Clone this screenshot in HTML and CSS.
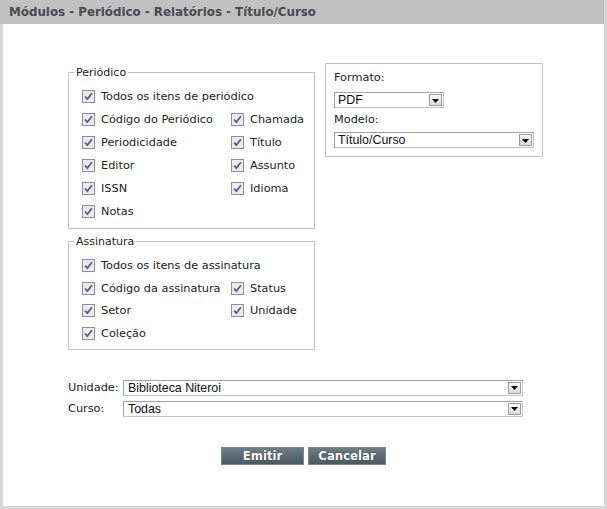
FILE: index.html
```html
<!DOCTYPE html>
<html lang="pt">
<head>
<meta charset="utf-8">
<title>Relatórios - Título/Curso</title>
<link rel="stylesheet" href="styles.css">
</head>
<body>
<div class="window">
  <div class="titlebar">Módulos - Periódico - Relatórios - Título/Curso</div>
  <div class="content">
    <div class="top">
      <div class="left-col">
        <fieldset class="group">
          <legend>Periódico</legend>
          <div class="checks">
            <label class="chk full"><svg class="cb" viewBox="0 0 13 13"><rect x="0.5" y="0.5" width="12" height="12" fill="#ebebeb" stroke="#8e8f8f"/><path d="M3 6.5 L5.3 9 L10 3.2" fill="none" stroke="#4f5f96" stroke-width="1.8"/></svg>Todos os itens de periódico</label>
            <label class="chk"><svg class="cb" viewBox="0 0 13 13"><rect x="0.5" y="0.5" width="12" height="12" fill="#ebebeb" stroke="#8e8f8f"/><path d="M3 6.5 L5.3 9 L10 3.2" fill="none" stroke="#4f5f96" stroke-width="1.8"/></svg>Código do Periódico</label>
            <label class="chk"><svg class="cb" viewBox="0 0 13 13"><rect x="0.5" y="0.5" width="12" height="12" fill="#ebebeb" stroke="#8e8f8f"/><path d="M3 6.5 L5.3 9 L10 3.2" fill="none" stroke="#4f5f96" stroke-width="1.8"/></svg>Chamada</label>
            <label class="chk"><svg class="cb" viewBox="0 0 13 13"><rect x="0.5" y="0.5" width="12" height="12" fill="#ebebeb" stroke="#8e8f8f"/><path d="M3 6.5 L5.3 9 L10 3.2" fill="none" stroke="#4f5f96" stroke-width="1.8"/></svg>Periodicidade</label>
            <label class="chk"><svg class="cb" viewBox="0 0 13 13"><rect x="0.5" y="0.5" width="12" height="12" fill="#ebebeb" stroke="#8e8f8f"/><path d="M3 6.5 L5.3 9 L10 3.2" fill="none" stroke="#4f5f96" stroke-width="1.8"/></svg>Título</label>
            <label class="chk"><svg class="cb" viewBox="0 0 13 13"><rect x="0.5" y="0.5" width="12" height="12" fill="#ebebeb" stroke="#8e8f8f"/><path d="M3 6.5 L5.3 9 L10 3.2" fill="none" stroke="#4f5f96" stroke-width="1.8"/></svg>Editor</label>
            <label class="chk"><svg class="cb" viewBox="0 0 13 13"><rect x="0.5" y="0.5" width="12" height="12" fill="#ebebeb" stroke="#8e8f8f"/><path d="M3 6.5 L5.3 9 L10 3.2" fill="none" stroke="#4f5f96" stroke-width="1.8"/></svg>Assunto</label>
            <label class="chk"><svg class="cb" viewBox="0 0 13 13"><rect x="0.5" y="0.5" width="12" height="12" fill="#ebebeb" stroke="#8e8f8f"/><path d="M3 6.5 L5.3 9 L10 3.2" fill="none" stroke="#4f5f96" stroke-width="1.8"/></svg>ISSN</label>
            <label class="chk"><svg class="cb" viewBox="0 0 13 13"><rect x="0.5" y="0.5" width="12" height="12" fill="#ebebeb" stroke="#8e8f8f"/><path d="M3 6.5 L5.3 9 L10 3.2" fill="none" stroke="#4f5f96" stroke-width="1.8"/></svg>Idioma</label>
            <label class="chk full"><svg class="cb" viewBox="0 0 13 13"><rect x="0.5" y="0.5" width="12" height="12" fill="#ebebeb" stroke="#8e8f8f"/><path d="M3 6.5 L5.3 9 L10 3.2" fill="none" stroke="#4f5f96" stroke-width="1.8"/></svg>Notas</label>
          </div>
        </fieldset>
        <fieldset class="group">
          <legend>Assinatura</legend>
          <div class="checks">
            <label class="chk full"><svg class="cb" viewBox="0 0 13 13"><rect x="0.5" y="0.5" width="12" height="12" fill="#ebebeb" stroke="#8e8f8f"/><path d="M3 6.5 L5.3 9 L10 3.2" fill="none" stroke="#4f5f96" stroke-width="1.8"/></svg>Todos os itens de assinatura</label>
            <label class="chk"><svg class="cb" viewBox="0 0 13 13"><rect x="0.5" y="0.5" width="12" height="12" fill="#ebebeb" stroke="#8e8f8f"/><path d="M3 6.5 L5.3 9 L10 3.2" fill="none" stroke="#4f5f96" stroke-width="1.8"/></svg>Código da assinatura</label>
            <label class="chk"><svg class="cb" viewBox="0 0 13 13"><rect x="0.5" y="0.5" width="12" height="12" fill="#ebebeb" stroke="#8e8f8f"/><path d="M3 6.5 L5.3 9 L10 3.2" fill="none" stroke="#4f5f96" stroke-width="1.8"/></svg>Status</label>
            <label class="chk"><svg class="cb" viewBox="0 0 13 13"><rect x="0.5" y="0.5" width="12" height="12" fill="#ebebeb" stroke="#8e8f8f"/><path d="M3 6.5 L5.3 9 L10 3.2" fill="none" stroke="#4f5f96" stroke-width="1.8"/></svg>Setor</label>
            <label class="chk"><svg class="cb" viewBox="0 0 13 13"><rect x="0.5" y="0.5" width="12" height="12" fill="#ebebeb" stroke="#8e8f8f"/><path d="M3 6.5 L5.3 9 L10 3.2" fill="none" stroke="#4f5f96" stroke-width="1.8"/></svg>Unidade</label>
            <label class="chk full"><svg class="cb" viewBox="0 0 13 13"><rect x="0.5" y="0.5" width="12" height="12" fill="#ebebeb" stroke="#8e8f8f"/><path d="M3 6.5 L5.3 9 L10 3.2" fill="none" stroke="#4f5f96" stroke-width="1.8"/></svg>Coleção</label>
          </div>
        </fieldset>
      </div>
      <div class="format-box">
        <div class="flabel">Formato:</div>
        <div class="select sel-pdf"><span class="val">PDF</span><span class="arrow"><svg viewBox="0 0 7 4" width="7" height="4"><path d="M0 0 H7 L3.5 4 Z" fill="#000"/></svg></span></div>
        <div class="flabel">Modelo:</div>
        <div class="select sel-model"><span class="val">Título/Curso</span><span class="arrow"><svg viewBox="0 0 7 4" width="7" height="4"><path d="M0 0 H7 L3.5 4 Z" fill="#000"/></svg></span></div>
      </div>
    </div>
    <div class="bottom">
      <div class="blabel">Unidade:</div>
      <div class="select sel-wide"><span class="val">Biblioteca Niteroi</span><span class="arrow"><svg viewBox="0 0 7 4" width="7" height="4"><path d="M0 0 H7 L3.5 4 Z" fill="#000"/></svg></span></div>
      <div class="blabel">Curso:</div>
      <div class="select sel-wide"><span class="val">Todas</span><span class="arrow"><svg viewBox="0 0 7 4" width="7" height="4"><path d="M0 0 H7 L3.5 4 Z" fill="#000"/></svg></span></div>
    </div>
    <div class="actions">
      <button class="btn btn-emit">Emitir</button>
      <button class="btn btn-cancel">Cancelar</button>
    </div>
  </div>
</div>
</body>
</html>
```
FILE: styles.css
```css
* { box-sizing: border-box; }
html, body { margin: 0; padding: 0; }
body {
  background: #d6d6d6;
  font-family: "DejaVu Sans", Verdana, sans-serif;
  width: 607px;
  height: 509px;
  overflow: hidden;
}
.window {
  height: 509px;
  display: flex;
  flex-direction: column;
}
.titlebar {
  height: 24px;
  background: #c0c0c0;
  margin-right: 3px;
  padding-left: 9px;
  line-height: 24px;
  font-weight: bold;
  font-size: 11.85px;
  color: #474b53;
  white-space: nowrap;
}
.content {
  flex: 1;
  background: #fff;
  margin: 0 3px 3px 3px;
  padding-top: 39px;
}
.top {
  display: flex;
  align-items: flex-start;
  gap: 10px;
  padding-left: 65px;
}
.left-col {
  width: 247px;
  margin-top: 3px;
}
fieldset.group {
  margin: 0;
  border: 1px solid #c3c3c3;
  padding: 6px 0 5px 13px;
  min-width: 0;
}
fieldset.group + fieldset.group { margin-top: 6px; padding-bottom: 4px; }
legend {
  font-size: 11px;
  line-height: 13px;
  padding: 0 2px;
  margin-left: -8px;
  color: #222;
}
.checks {
  display: grid;
  grid-template-columns: 149px auto;
  grid-auto-rows: 23px;
}
fieldset.group + fieldset.group .checks { grid-auto-rows: 22.7px; }
.chk {
  display: flex;
  align-items: center;
  gap: 6px;
  font-size: 11.3px;
  color: #222;
  white-space: nowrap;
}
.full { grid-column: 1 / -1; }
.cb { width: 13px; height: 13px; flex: none; }
.format-box {
  width: 218px;
  border: 1px solid #c3c3c3;
  padding: 6px 8px 8px 8px;
}
.flabel {
  font-size: 11.3px;
  line-height: 16px;
  margin-bottom: 6px;
  color: #222;
}
.flabel + .sel-pdf + .flabel { margin-bottom: 4px; }
.select {
  display: flex;
  align-items: center;
  height: 16px;
  border: 1px solid #a2a2a2;
  border-bottom-color: #c4c4c4;
  border-right-color: #c4c4c4;
  background: #fff;
  padding: 0 1px 0 3px;
  font-family: "Liberation Sans", Arial, sans-serif;
  font-size: 12.4px;
  color: #111;
}
.select .val { flex: 1; white-space: nowrap; }
.select .arrow {
  width: 13px;
  height: 12px;
  border: 1px solid #9b9b9b;
  background: linear-gradient(#fafafa, #d9d9d9);
  display: flex;
  align-items: center;
  justify-content: center;
  padding-top: 1px;
}
.sel-pdf { width: 110px; margin-bottom: 4px; }
.sel-model { width: 200px; }
.bottom {
  display: grid;
  grid-template-columns: 55px 400px;
  row-gap: 5px;
  align-items: center;
  margin-top: 30px;
  padding-left: 65px;
}
.blabel {
  font-size: 11.3px;
  color: #222;
}
.sel-wide { padding-left: 4px; }
.actions {
  display: flex;
  justify-content: center;
  gap: 4px;
  margin-top: 30px;
}
.btn {
  height: 18px;
  padding: 0;
  border: 1px solid #858585;
  background: linear-gradient(#6f7e86, #4a5961);
  color: #fff;
  font-family: "DejaVu Sans", Verdana, sans-serif;
  font-weight: bold;
  font-size: 11.7px;
  line-height: 16px;
  text-shadow: 0 0 1px #1d2a30;
}
.btn-emit { width: 83px; }
.btn-cancel { width: 78px; }
```
